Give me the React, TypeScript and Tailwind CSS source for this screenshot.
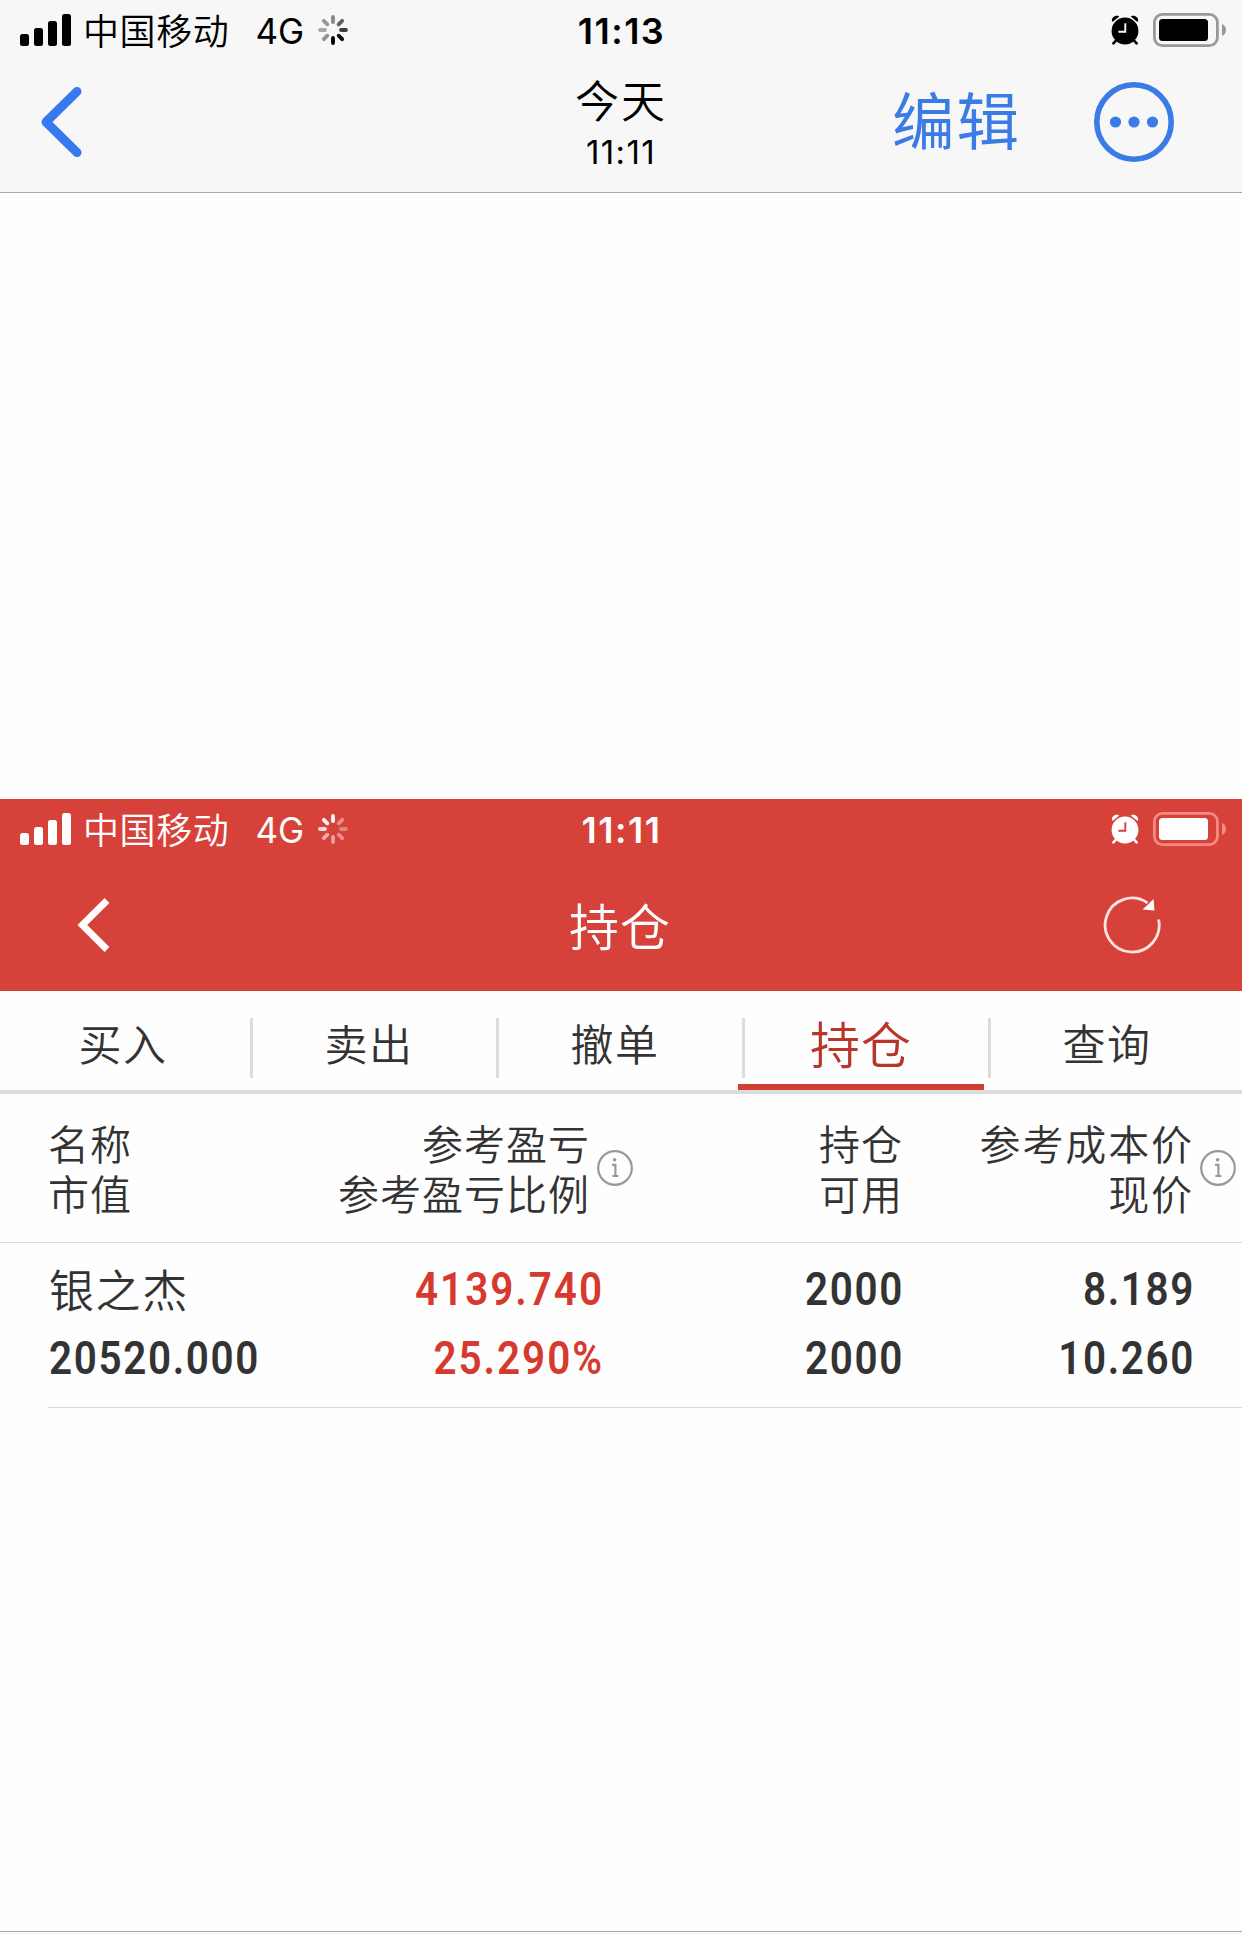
import clsx from 'clsx'

const TABS = ['买入', '卖出', '撤单', '持仓', '查询']
const ACTIVE_TAB = '持仓'

// Opacity of each spinner blade, clockwise from the top
const SPINNER_DARK = [0.45, 0.6, 0.75, 0.95, 1, 0.4, 0.32, 0.38]
const SPINNER_LIGHT = [1, 0.4, 0.35, 0.42, 0.5, 0.55, 0.8, 0.95]

function SignalBars() {
  return (
    <svg width="51" height="32" viewBox="0 0 51 32" fill="currentColor">
      <rect x="0" y="20" width="9" height="12" rx="2.5" />
      <rect x="14" y="14" width="9" height="18" rx="2.5" />
      <rect x="28" y="7" width="9" height="25" rx="2.5" />
      <rect x="42" y="0" width="9" height="32" rx="2.5" />
    </svg>
  )
}

function Spinner({ blades }: { blades: number[] }) {
  return (
    <svg width="30" height="30" viewBox="-15 -15 30 30">
      {blades.map((opacity, i) => (
        <line
          key={i}
          y1={-13}
          y2={-8}
          stroke="currentColor"
          strokeWidth={3.8}
          strokeLinecap="round"
          opacity={opacity}
          transform={`rotate(${i * 45})`}
        />
      ))}
    </svg>
  )
}

function AlarmIcon({ hands }: { hands: string }) {
  return (
    <svg width="28" height="30" viewBox="0 0 28 30" fill="currentColor">
      <path d="M1 6.2C0.2 3 3.2 0 7.6 0.9L8 1.8L1.8 6.8Z" />
      <path d="M27 6.2C27.8 3 24.8 0 20.4 0.9L20 1.8L26.2 6.8Z" />
      <circle cx="14" cy="16" r="13.4" />
      <path d="M5 25.5L2.4 28.4M23 25.5L25.6 28.4" stroke="currentColor" strokeWidth="2.6" strokeLinecap="round" />
      <path d="M14.3 8.2V16.8H7.4" fill="none" stroke={hands} strokeWidth="1.9" />
    </svg>
  )
}

function BatteryIcon({ outline }: { outline: string }) {
  return (
    <svg width="74" height="34" viewBox="0 0 74 34">
      <rect x="1.4" y="1.4" width="63" height="31.2" rx="8" fill="none" stroke={outline} strokeWidth="2.8" />
      <rect x="6" y="6" width="49" height="22" rx="3.5" fill="currentColor" />
      <path d="M69 11C71.5 12 73 14.3 73 17C73 19.7 71.5 22 69 23Z" fill={outline} />
    </svg>
  )
}

function InfoIcon() {
  return (
    <svg className="shrink-0" width="36" height="36" viewBox="0 0 36 36" fill="none" stroke="#999999">
      <circle cx="18" cy="18" r="16.8" strokeWidth="2.2" />
      <circle cx="17.6" cy="9.8" r="1.8" fill="#999999" stroke="none" />
      <path d="M15 14.8H18.4V26M15.4 26H21.4" strokeWidth="2.2" />
    </svg>
  )
}

interface StatusBarProps {
  time: string
  blades: number[]
  hands: string
  outline: string
}

function StatusBar({ time, blades, hands, outline }: StatusBarProps) {
  return (
    <div className="grid grid-cols-[1fr_auto_1fr] items-center h-[60px] pl-[20px] pr-[15px]">
      <div className="flex items-center">
        <SignalBars />
        <span className="ml-[12px] mt-[4px] text-[36px] leading-[54px] tracking-[0.6px] font-[350]">中国移动</span>
        <span className="ml-[26px] mt-[2px] text-[35px] leading-[54px]">4G</span>
        <span className="ml-[14px]">
          <Spinner blades={blades} />
        </span>
      </div>
      <span className="mt-[2px] mr-[4px] text-[36px] leading-[54px] font-semibold tracking-[1.5px]">{time}</span>
      <div className="flex items-center justify-end gap-[14px]">
        <AlarmIcon hands={hands} />
        <BatteryIcon outline={outline} />
      </div>
    </div>
  )
}

function Num({ value, align, red }: { value: string; align: 'left' | 'right'; red?: boolean }) {
  return (
    <div
      className={clsx(
        "font-['Roboto'] text-[47px] leading-[69px] font-semibold scale-x-[0.86] whitespace-nowrap",
        align === 'left' ? 'origin-left text-left' : 'origin-right text-right',
        red ? 'tracking-[2.3px] text-[#d63a2f]' : 'tracking-[1.9px]'
      )}
    >
      {value}
    </div>
  )
}

export default function App() {
  return (
    <div className="w-[1242px] h-[1934px] flex flex-col overflow-hidden bg-[#fefefe] text-black font-['Inter','Noto_Sans_CJK_SC',sans-serif]">
      {/* Photo viewer header */}
      <header className="h-[193px] shrink-0 bg-[#f7f7f7] border-b border-[#a9a9a9]">
        <StatusBar time="11:13" blades={SPINNER_DARK} hands="#f7f7f7" outline="#999999" />
        <div className="grid grid-cols-[1fr_auto_1fr] h-[132px] pl-[40px] pr-[68px]">
          <svg className="mt-[26px]" width="44" height="72" viewBox="0 0 44 72" fill="none">
            <path
              d="M37 5.5L6 36L37 66.5"
              stroke="#3878f0"
              strokeWidth="9"
              strokeLinecap="round"
              strokeLinejoin="round"
            />
          </svg>
          <div className="flex flex-col items-center ml-[28px]">
            <span className="mt-[17px] text-[44px] leading-[50px] tracking-[2px] font-[350]">今天</span>
            <span className="mt-[5px] text-[33px] leading-[40px] tracking-[1.4px]">11:11</span>
          </div>
          <div className="flex justify-end text-[#3b7be6]">
            <span className="mt-[27px] text-[62.5px] leading-[70px] tracking-[2px]">编辑</span>
            <svg className="ml-[73px] mt-[22px]" width="80" height="80" viewBox="0 0 80 80">
              <circle cx="40" cy="40" r="37.2" fill="none" stroke="currentColor" strokeWidth="5.6" />
              <circle cx="21.5" cy="40" r="5.6" fill="currentColor" />
              <circle cx="40" cy="40" r="5.6" fill="currentColor" />
              <circle cx="58.5" cy="40" r="5.6" fill="currentColor" />
            </svg>
          </div>
        </div>
      </header>

      <div className="h-[606px] shrink-0" />

      {/* Trading app header */}
      <div className="h-[192px] shrink-0 bg-[#d6423a] text-white">
        <StatusBar time="11:11" blades={SPINNER_LIGHT} hands="#d6423a" outline="#f58a82" />
        <div className="grid grid-cols-3 items-center h-[132px] pl-[76px] pr-[80px]">
          <svg width="36" height="56" viewBox="0 0 36 56" fill="none" stroke="currentColor" strokeWidth="6.8">
            <path d="M31 3.5L6.3 28L31 52.5" />
          </svg>
          <span className="pl-[2px] pt-[5px] text-center text-[50px] leading-[60px] tracking-[1px] font-[350]">持仓</span>
          <svg className="justify-self-end" width="60" height="60" viewBox="0 0 60 60" fill="none">
            <path
              d="M56.6 24.5A27 27 0 1 1 45.5 7.8"
              stroke="#ffe3de"
              strokeWidth="2.8"
            />
            <path d="M51.5 4L52.5 15.5L40.5 14.5L45.5 10Z" fill="#ffffff" />
          </svg>
        </div>
      </div>

      {/* Tabs */}
      <nav className="flex h-[103px] shrink-0 border-b-4 border-[#dcdcdc] text-[#333333]">
        {TABS.map((tab, i) => (
          <div
            key={tab}
            className={clsx(
              'relative w-[246px] flex items-center justify-center font-[350]',
              tab === ACTIVE_TAB
                ? 'pt-[18px] text-[50px] tracking-[1px] text-[#b8352a] border-b-[6px] border-[#d03f34]'
                : 'pt-[10px] text-[43px] tracking-[1.4px]'
            )}
          >
            {i > 0 && <i className="absolute left-[4px] top-[27px] w-[3px] h-[60px] bg-[#dcdcdc]" />}
            {tab}
          </div>
        ))}
      </nav>

      {/* Column titles */}
      <div className="grid grid-cols-[250px_383px_270px_333px] items-center h-[149px] shrink-0 border-b border-[#d9d9d9] text-[41px] leading-[50px] tracking-[1px] text-[#333333] font-[350]">
        <div className="pl-[48px] pt-[3px]">
          <div>名称</div>
          <div>市值</div>
        </div>
        <div className="flex items-center justify-end gap-[7px] text-right">
          <div className="pt-[3px]">
            <div>参考盈亏</div>
            <div>参考盈亏比例</div>
          </div>
          <InfoIcon />
        </div>
        <div className="pt-[3px] pl-[2px] text-right tracking-[1px]">
          <div>持仓</div>
          <div>可用</div>
        </div>
        <div className="flex items-center justify-end gap-[6px] text-right tracking-[1.9px]">
          <div className="pt-[3px]">
            <div>参考成本价</div>
            <div>现价</div>
          </div>
          <InfoIcon />
        </div>
      </div>

      {/* Holding */}
      <div className="ml-[48px] grid grid-cols-[250px_306px_300px_291px] h-[165px] shrink-0 border-b border-[#d9d9d9] pt-[11px] text-[#333333]">
        <div className="pl-[1px]">
          <div className="pt-[7px] text-[45px] leading-[62px] tracking-[1.6px] font-[350]">银之杰</div>
          <Num value="20520.000" align="left" />
        </div>
        <div>
          <Num value="4139.740" align="right" red />
          <Num value="25.290%" align="right" red />
        </div>
        <div>
          <Num value="2000" align="right" />
          <Num value="2000" align="right" />
        </div>
        <div>
          <Num value="8.189" align="right" />
          <Num value="10.260" align="right" />
        </div>
      </div>

      <div className="mt-auto h-[3px] shrink-0 border-t border-[#a9a9a9] bg-[#f7f7f7]" />
    </div>
  )
}
